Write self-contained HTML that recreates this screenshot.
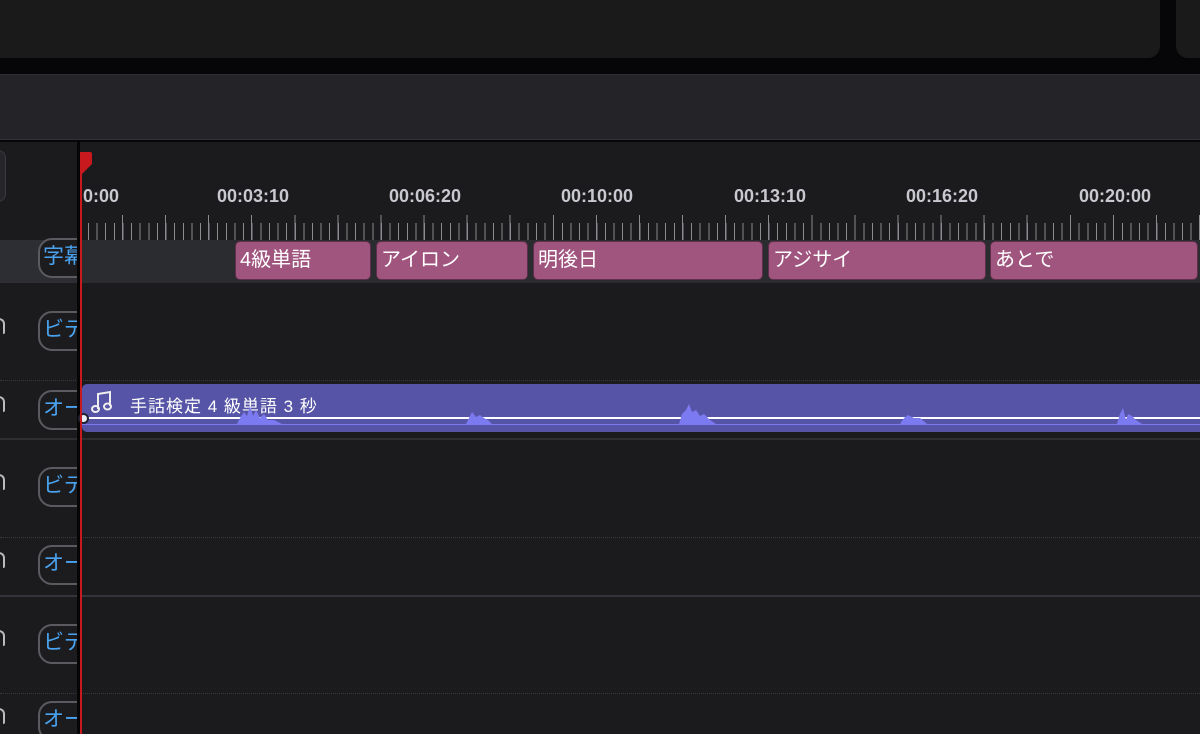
<!DOCTYPE html>
<html><head><meta charset="utf-8"><style>
*{margin:0;padding:0;box-sizing:border-box}
body{width:1200px;height:734px;overflow:hidden;background:#1b1b1d;position:relative;font-family:"Liberation Sans","Noto Sans CJK JP",sans-serif}
.a{position:absolute}
.left{position:absolute;left:0;top:142px;width:77px;height:592px;overflow:hidden}
.pill{position:absolute;left:38px;width:60px;height:40px;border:2px solid #5a5a60;border-radius:14px;background:#1c1c1f;color:#4aa3f0;font-size:21px;line-height:34px;padding-left:3px;overflow:hidden;white-space:nowrap}
.lock{position:absolute;left:-7px;width:12px;height:16px;border:2px solid #bbb;border-radius:7px 7px 2px 2px;border-bottom:none}
.clip{position:absolute;top:241px;height:39px;background:#a0557f;border:1px solid #5e2e4b;border-radius:5px;color:#fff;font-size:20px;line-height:37px;padding-left:4px;white-space:nowrap;overflow:hidden}
.lab{position:absolute;top:186px;color:#c8c8d0;font-size:18px;font-weight:bold;transform:translateX(-50%)}
</style></head><body>
<div class="a" style="left:0;top:0;width:1200px;height:142px;background:#060609"></div>
<div class="a" style="left:0;top:0;width:1160px;height:58px;background:#1a1a1a;border-radius:0 0 12px 0"></div>
<div class="a" style="left:1176px;top:0;width:30px;height:58px;background:#1a1a1a;border-radius:0 0 0 12px"></div>
<div class="a" style="left:0;top:74px;width:1200px;height:66px;background:#242328;border-top:1px solid #2e2d33;border-bottom:1px solid #333238"></div>
<div class="a" style="left:-10px;top:150px;width:16px;height:52px;background:#26262a;border:1px solid #3a3a3f;border-radius:8px"></div>
<div class="a" style="left:82px;top:215px;width:1118px;height:25px;background:repeating-linear-gradient(90deg,#8a8a90 0 1px,transparent 1px 8.615px);background-position:6px 8px;background-size:100% 17px;background-repeat:no-repeat"></div>
<div class="a" style="left:82px;top:215px;width:1118px;height:25px;background:repeating-linear-gradient(90deg,#8a8a90 0 1px,transparent 1px 43.08px);background-position:40px 0;background-size:100% 25px;background-repeat:no-repeat"></div>
<div class="lab" style="left:101px">0:00</div>
<div class="lab" style="left:253px">00:03:10</div>
<div class="lab" style="left:425px">00:06:20</div>
<div class="lab" style="left:597px">00:10:00</div>
<div class="lab" style="left:770px">00:13:10</div>
<div class="lab" style="left:942px">00:16:20</div>
<div class="lab" style="left:1115px">00:20:00</div>
<div class="a" style="left:0;top:240px;width:1200px;height:43px;background:#2d2e33"></div>
<div class="a" style="left:80px;top:240px;width:1120px;height:43px;background:#2b2c30"></div>
<div class="a" style="left:0;top:380px;width:1200px;border-top:1px dotted #3a3a3e"></div>
<div class="a" style="left:0;top:438px;width:1200px;height:2px;background:#2e2e32"></div>
<div class="a" style="left:0;top:537px;width:1200px;border-top:1px dotted #3a3a3e"></div>
<div class="a" style="left:0;top:595px;width:1200px;height:2px;background:#34343a"></div>
<div class="a" style="left:0;top:693px;width:1200px;border-top:1px dotted #3a3a3e"></div>
<div class="left">
<div class="pill" style="top:96px">字幕</div>
<div class="pill" style="top:169px">ビデオ</div>
<div class="pill" style="top:248px">オーディオ</div>
<div class="pill" style="top:325px">ビデオ</div>
<div class="pill" style="top:403px">オーディオ</div>
<div class="pill" style="top:482px">ビデオ</div>
<div class="pill" style="top:559px">オーディオ</div>
<div class="lock" style="top:176px"></div><div class="lock" style="top:254px"></div><div class="lock" style="top:332px"></div><div class="lock" style="top:410px"></div><div class="lock" style="top:488px"></div><div class="lock" style="top:566px"></div>
</div>
<div class="a" style="left:77px;top:142px;width:3px;height:592px;background:#050505"></div>
<div class="clip" style="left:235px;width:136px">4級単語</div>
<div class="clip" style="left:376px;width:152px">アイロン</div>
<div class="clip" style="left:533px;width:230px">明後日</div>
<div class="clip" style="left:768px;width:218px">アジサイ</div>
<div class="clip" style="left:990px;width:208px">あとで</div>
<div class="a" style="left:82px;top:384px;width:1118px;height:48px;background:#5654a6;border-radius:5px 0 0 5px;overflow:hidden">
<svg class="a" style="left:9px;top:6px" width="22" height="24"><g fill="none" stroke="#eee" stroke-width="2"><path d="M7 19V4L19 2V16"/></g><ellipse cx="4.5" cy="19" rx="3.5" ry="3" fill="none" stroke="#eee" stroke-width="2"/><ellipse cx="16.5" cy="16.5" rx="3.5" ry="3" fill="none" stroke="#eee" stroke-width="2"/></svg>
<div class="a" style="left:48px;top:8px;color:#fff;font-size:17px;letter-spacing:1px">手話検定 4 級単語 3 秒</div>
<div class="a" style="left:0;top:33px;width:100%;height:2px;background:#fff"></div>
<div class="a" style="left:0;top:40px;width:100%;height:1px;background:#7c7af0"></div>
<svg class="a" style="left:0;top:0" width="1118" height="48"><g fill="#7c7af0">
<polygon points="155,40 158,34 162,28 165,32 168,22 171,32 174,26 178,34 182,30 186,36 192,36 200,40"/>
<polygon points="384,40 387,34 390,28 394,33 398,31 402,34 406,36 410,40"/>
<polygon points="597,40 600,30 604,26 607,20 610,28 614,26 618,32 622,30 628,36 634,40"/>
<polygon points="818,40 822,34 826,31 832,34 838,34 845,40"/>
<polygon points="1035,40 1038,30 1041,24 1044,36 1046,30 1050,32 1054,36 1060,40"/>
</g></svg>
</div>
<div class="a" style="left:78px;top:413px;width:11px;height:11px;border-radius:50%;background:#e8eef8;border:2px solid #223"></div>
<div class="a" style="left:80px;top:152px;width:2px;height:582px;background:#c8191e"></div>
<svg class="a" style="left:80px;top:152px" width="13" height="24"><path d="M0 0H10Q12 0 12 2V12L0 24Z" fill="#c8191e"/></svg>
</body></html>
